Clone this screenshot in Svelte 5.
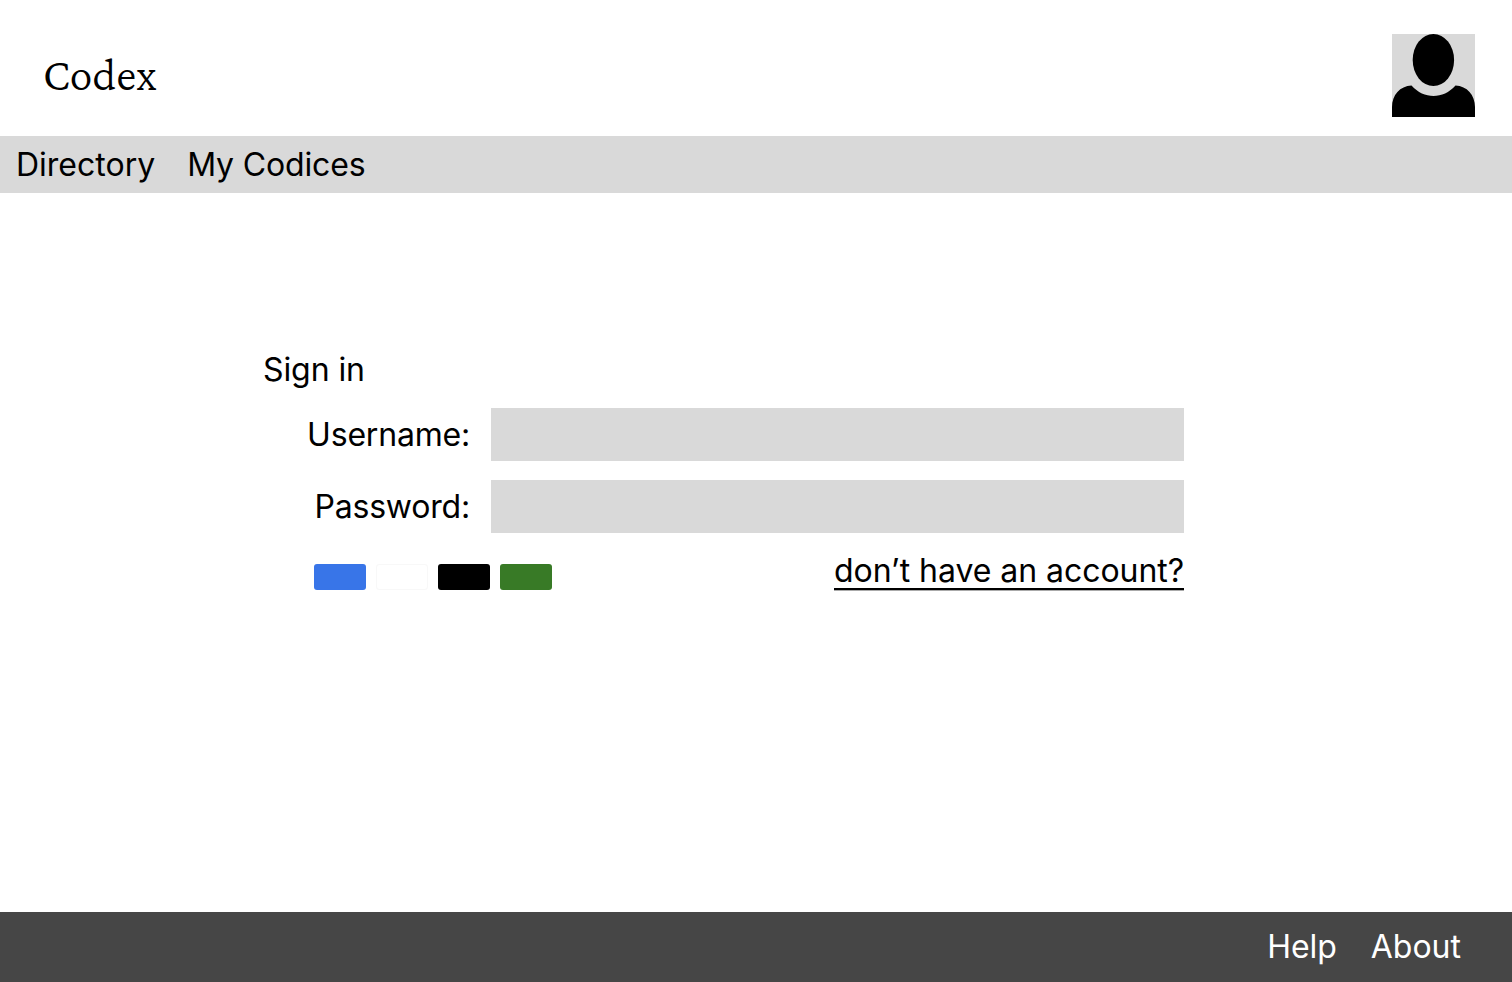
<script>
  const nav = ['Directory', 'My Codices'];
  const footer = ['Help', 'About'];
  const swatches = ['blue', 'white', 'black', 'green'];
</script>

<div class="page">
  <header>
    <span class="brand">Codex</span>
    <svg class="avatar" viewBox="0 0 83 83" width="83" height="83" aria-hidden="true">
      <rect width="83" height="83" fill="#d9d9d9" />
      <path d="M0 83V73C0 61 8 52 19.500 51.500C32 65.500 51 65.500 63.500 51.500C75 52 83 61 83 73V83Z" />
      <ellipse cx="41.400" cy="26" rx="20.700" ry="26" />
    </svg>
  </header>
  <nav>
    {#each nav as item}<span>{item}</span>{/each}
  </nav>
  <main>
    <h1>Sign in</h1>
    <form>
      <label for="user">Username:</label>
      <input id="user" type="text" />
      <label for="pass">Password:</label>
      <input id="pass" type="password" />
    </form>
    <div class="actions">
      <div class="swatches">
        {#each swatches as name}<i class={name}></i>{/each}
      </div>
      <span class="link">don’t have an account?</span>
    </div>
  </main>
  <footer>
    {#each footer as item}<span>{item}</span>{/each}
  </footer>
</div>

<style>
  :global(body) { margin: 0; background: #fff; }
  .page { display: flex; flex-direction: column; height: 982px; font: 400 32px/39px Inter, sans-serif; letter-spacing: -0.08px; color: #000; }
  header { display: flex; justify-content: space-between; align-items: flex-start; height: 136px; padding: 34px 37px 0 43px; box-sizing: border-box; }
  .brand { font: 300 46px/50px "Crimson Pro", "Crimson Text", "Liberation Serif", serif; letter-spacing: 0; margin-top: 16px; }
  .avatar { display: block; }
  nav { display: flex; gap: 33px; height: 57px; background: #d9d9d9; padding: 9px 16px 0; box-sizing: border-box; }
  nav span:first-child { letter-spacing: 0; }
  nav span:last-child { margin-left: -1px; letter-spacing: -0.15px; }
  main { flex: 1; padding: 157px 328px 0 263px; }
  h1 { font: inherit; margin: 0 0 19px; }
  form { display: grid; grid-template-columns: 207px 693px; column-gap: 21px; row-gap: 19px; }
  label { text-align: right; padding-top: 7px; letter-spacing: -0.2px; }
  input { box-sizing: border-box; width: 693px; height: 53px; border: 0; border-radius: 0; background: #d9d9d9; padding: 0 12px; font: inherit; }
  .actions { display: flex; justify-content: space-between; padding: 18px 0 0 51px; }
  .swatches { display: flex; gap: 10px; padding-top: 13px; }
  .swatches i { box-sizing: border-box; width: 52px; height: 26px; border-radius: 3px; }
  .blue { background: #3875e8; }
  .white { background: #fff; border: 1px solid #f8f8f8; }
  .black { background: #000; }
  .green { background: #387a26; }
  .link { height: 37px; border-bottom: 2px solid #000; box-shadow: 0 1px 0 #aaa; letter-spacing: -0.05px; }
  footer { display: flex; justify-content: flex-end; gap: 34px; height: 70px; background: #464646; color: #fff; padding: 15px 51px 0 0; box-sizing: border-box; letter-spacing: 0; }
  footer span:first-child { letter-spacing: -0.1px; }
</style>
